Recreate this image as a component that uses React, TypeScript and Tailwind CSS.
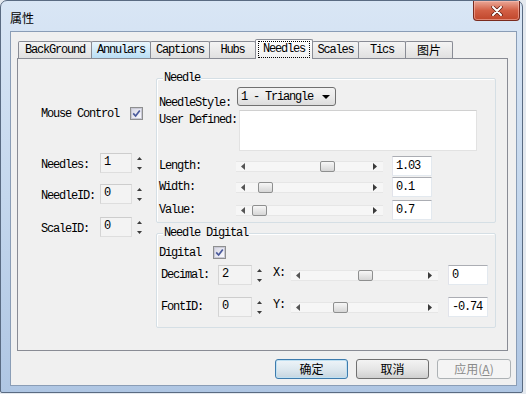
import React from 'react';

const mono = "font-['Liberation_Mono',monospace] text-[12px] tracking-[-1.2px] leading-[14px] text-black whitespace-pre";
const cjk = "font-['Noto_Sans_CJK_SC',sans-serif] text-[12px] leading-[16px]";

function Tri({ dir, color = '#3c3c3c' }: { dir: 'up' | 'down' | 'left' | 'right'; color?: string }) {
  if (dir === 'up')
    return (
      <svg width="5" height="3" viewBox="0 0 5 3">
        <path d="M2.5 0L5 3H0z" fill={color} />
      </svg>
    );
  if (dir === 'down')
    return (
      <svg width="5" height="3" viewBox="0 0 5 3">
        <path d="M0 0h5L2.5 3z" fill={color} />
      </svg>
    );
  if (dir === 'left')
    return (
      <svg width="4" height="7" viewBox="0 0 4 7">
        <path d="M4 0v7L0 3.5z" fill={color} />
      </svg>
    );
  return (
    <svg width="4" height="7" viewBox="0 0 4 7">
      <path d="M0 0v7l4-3.5z" fill={color} />
    </svg>
  );
}

function Check() {
  return (
    <div className="w-[13px] h-[13px] border border-[#8e8f8f] bg-[#f4f4f4] flex items-center justify-center shrink-0">
      <div className="w-[11px] h-[11px] border border-[#c9c9d6] bg-gradient-to-br from-[#d8d8e4] to-[#fafafe] flex items-center justify-center">
        <svg width="9" height="9" viewBox="0 0 9 9">
          <path d="M1.2 4.4L3.6 7L7.8 1.4" fill="none" stroke="#4a5a9c" strokeWidth="1.7" />
        </svg>
      </div>
    </div>
  );
}

function SpinEdit({ value, box }: { value: string; box: string }) {
  return (
    <div className="flex items-center">
      <div className={`h-[20px] border border-[#dedede] border-t-[#cdcdcd] border-l-[#d4d4d4] bg-[#f3f3f3] pl-[3px] pb-[3px] flex items-center ${box}`}>
        <span className={mono}>{value}</span>
      </div>
      <div className="ml-[3px] w-[8px] flex flex-col items-center gap-[7px]">
        <Tri dir="up" />
        <Tri dir="down" />
      </div>
    </div>
  );
}

function Slider({ thumb, w }: { thumb: number; w: string }) {
  return (
    <div className={`relative h-[15px] shrink-0 ${w}`}>
      <div className="absolute inset-x-0 top-[2px] h-[11px] bg-[#f6f6f6] border-t border-b border-[#e6e6e6]" />
      <div className="absolute left-[5px] top-[4px] flex">
        <Tri dir="left" color="#555" />
      </div>
      <div className="absolute right-[6px] top-[4px] flex">
        <Tri dir="right" color="#3a3a3a" />
      </div>
      <div
        className="absolute top-[2px] w-[15px] h-[11px] rounded-[2px] border border-[#8e8f8f] bg-gradient-to-b from-[#f7f7f7] to-[#d6d6d6]"
        style={{ left: thumb }}
      />
    </div>
  );
}

function ValBox({ v }: { v: string }) {
  return (
    <div className="w-[40px] h-[20px] bg-white border border-[#e3e9ef] border-t-[#abadb3] border-l-[#e2e3ea] pl-[3px] flex items-center shrink-0">
      <span className={mono}>{v}</span>
    </div>
  );
}

function Group({ title, h, children, extra = '' }: { title: string; h: string; children: React.ReactNode; extra?: string }) {
  return (
    <div className={`relative w-[340px] border border-[#d5dfe5] rounded-[2px] shadow-[inset_1px_1px_0_#ffffff] ${h} ${extra}`}>
      <span className={`absolute -top-[8px] left-[6px] px-[1px] bg-[#f0f0f0] ${mono}`}>{title}</span>
      {children}
    </div>
  );
}

function Tab({ label, w, hover = false, cn = false }: { label: string; w: string; hover?: boolean; cn?: boolean }) {
  return (
    <div
      className={`-ml-px first:ml-0 h-[17px] border border-b-0 border-[#898c95] rounded-t-[2px] flex items-center justify-center ${w} ${
        hover ? 'bg-gradient-to-b from-[#eaf6fd] to-[#b9def5]' : 'bg-gradient-to-b from-[#f4f4f4] to-[#e0e0e0]'
      }`}
    >
      <span className={cn ? cjk : mono}>{label}</span>
    </div>
  );
}

export default function App() {
  return (
    <div className="w-[526px] h-[394px] bg-[#e4e9ef] overflow-hidden">
      <div className="w-[523px] h-[393px] rounded-t-[7px] rounded-b-[2px] border border-[#5a6b82] bg-gradient-to-b from-[#d9e6f5] via-[#c4d7ed] to-[#afc6e3] flex flex-col">
        <div className="h-[30px] shrink-0 flex items-start">
          <div className={`${cjk} ml-[9px] mt-[9px] text-black`}>属性</div>
          <div className="ml-auto mr-[2px] w-[47px] h-[20px] rounded-b-[4px] border border-t-0 border-[#7a2b1f] bg-gradient-to-b from-[#e9a797] via-[#d25f45] to-[#c0462b] flex items-center justify-center shadow-[inset_0_0_0_1px_rgba(255,200,190,0.5)]">
            <svg width="12" height="10" viewBox="0 0 12 10">
              <path d="M2 1L10 9M10 1L2 9" stroke="#5a1a10" strokeWidth="3.4" strokeLinecap="round" />
              <path d="M2 1L10 9M10 1L2 9" stroke="#ffffff" strokeWidth="2" strokeLinecap="round" />
            </svg>
          </div>
        </div>

        <div className="ml-[9px] w-[507px] h-[355px] border border-[#8a9db6] bg-[#f0f0f0] flex flex-col pl-[6px] pt-[7px]">
          {/* tab strip */}
          <div className="flex items-end h-[19px] pl-[1px] relative z-10">
            <Tab label="BackGround" w="w-[74px]" />
            <Tab label="Annulars" w="w-[60px]" hover />
            <Tab label="Captions" w="w-[60px]" />
            <Tab label="Hubs" w="w-[47px]" />
            <div className="relative z-10 -ml-px w-[58px] h-[20px] -mb-px border border-b-0 border-[#898c95] rounded-t-[2px] bg-gradient-to-b from-white to-[#f0f0f0] flex items-center justify-center">
              <span className={`${mono} border border-dotted border-black px-[4px] leading-[15px]`}>Needles</span>
            </div>
            <Tab label="Scales" w="w-[47px]" />
            <Tab label="Tics" w="w-[48px]" />
            <Tab label="图片" w="w-[48px]" cn />
          </div>

          {/* tab page */}
          <div className="w-[491px] h-[293px] border border-[#898c95] bg-[#f0f0f0] flex">
            <div className="w-[138px] pl-[23px] flex flex-col">
              <div className="mt-[48px] h-[13px] flex items-center">
                <span className={`${mono} w-[89px]`}>Mouse Control</span>
                <Check />
              </div>
              <div className="mt-[33px] flex items-center">
                <span className={`${mono} w-[59px] pt-[4px]`}>Needles:</span>
                <SpinEdit value="1" box="w-[32px]" />
              </div>
              <div className="mt-[11px] flex items-center">
                <span className={`${mono} w-[59px] pt-[4px]`}>NeedleID:</span>
                <SpinEdit value="0" box="w-[32px]" />
              </div>
              <div className="mt-[13px] flex items-center">
                <span className={`${mono} w-[59px] pt-[4px]`}>ScaleID:</span>
                <SpinEdit value="0" box="w-[32px]" />
              </div>
            </div>

            <div className="flex flex-col pt-[19px]">
              <Group title="Needle" h="h-[145px]">
                <div className="flex flex-col pl-[2px]">
                  <div className="mt-[8px] h-[19px] flex items-start">
                    <span className={`${mono} w-[78px] pt-[9px]`}>NeedleStyle:</span>
                    <div className="w-[99px] h-[19px] border border-[#707070] rounded-[3px] bg-gradient-to-b from-[#f3f3f3] via-[#ebebeb] to-[#dcdcdc] flex items-center pl-[3px]">
                      <span className={mono}>1 - Triangle</span>
                      <svg className="ml-auto mr-[5px]" width="8" height="4" viewBox="0 0 8 4">
                        <path d="M0 0h8L4 4z" fill="#000" />
                      </svg>
                    </div>
                  </div>
                  <div className="mt-[4px] flex items-start">
                    <span className={`${mono} w-[80px] pt-[3px]`}>User Defined:</span>
                    <div className="w-[238px] h-[41px] bg-white border border-[#e2e2e2] border-t-[#d0d0d0]" />
                  </div>
                  <div className="mt-[5px] h-[20px] flex items-center">
                    <span className={`${mono} w-[77px]`}>Length:</span>
                    <Slider thumb={84} w="w-[147px]" />
                    <div className="ml-[9px]">
                      <ValBox v="1.03" />
                    </div>
                  </div>
                  <div className="mt-[1px] h-[20px] flex items-center">
                    <span className={`${mono} w-[77px]`}>Width:</span>
                    <Slider thumb={22} w="w-[147px]" />
                    <div className="ml-[9px]">
                      <ValBox v="0.1" />
                    </div>
                  </div>
                  <div className="mt-[3px] h-[20px] flex items-center">
                    <span className={`${mono} w-[77px]`}>Value:</span>
                    <Slider thumb={16} w="w-[147px]" />
                    <div className="ml-[9px]">
                      <ValBox v="0.7" />
                    </div>
                  </div>
                </div>
              </Group>

              <Group title="Needle Digital" h="h-[95px]" extra="mt-[10px]">
                <div className="flex flex-col pl-[2px]">
                  <div className="mt-[12px] h-[13px] flex items-center">
                    <span className={`${mono} w-[54px]`}>Digital</span>
                    <Check />
                  </div>
                  <div className="mt-[6px] pl-[2px] h-[20px] flex items-center">
                    <span className={`${mono} w-[57px]`}>Decimal:</span>
                    <SpinEdit value="2" box="w-[34px]" />
                    <span className={`${mono} ml-[10px] w-[18px] pb-[4px]`}>X:</span>
                    <Slider thumb={67} w="w-[147px]" />
                    <div className="ml-[10px]">
                      <ValBox v="0" />
                    </div>
                  </div>
                  <div className="mt-[12px] pl-[2px] h-[20px] flex items-center">
                    <span className={`${mono} w-[57px]`}>FontID:</span>
                    <SpinEdit value="0" box="w-[34px]" />
                    <span className={`${mono} ml-[10px] w-[18px] pb-[4px]`}>Y:</span>
                    <Slider thumb={42} w="w-[147px]" />
                    <div className="ml-[10px]">
                      <ValBox v="-0.74" />
                    </div>
                  </div>
                </div>
              </Group>
            </div>
          </div>

          {/* buttons */}
          <div className="mt-[8px] pr-[5px] flex justify-end gap-[8px]">
            <button className={`${cjk} w-[73px] h-[20px] rounded-[3px] border border-[#3d7bad] bg-gradient-to-b from-[#eef4f8] via-[#dde8ef] to-[#c6d5e0] shadow-[inset_0_0_0_1px_#bfe0f2] text-black`}>
              确定
            </button>
            <button className={`${cjk} w-[73px] h-[20px] rounded-[3px] border border-[#707070] bg-gradient-to-b from-[#f3f3f3] via-[#e6e6e6] to-[#d0d0d0] text-black`}>
              取消
            </button>
            <button className={`${cjk} w-[74px] h-[20px] rounded-[3px] border border-[#adb2b5] bg-[#f4f4f4] text-[#8a8a8a]`}>
              应用(<span className="underline">A</span>)
            </button>
          </div>
        </div>
      </div>
    </div>
  );
}
